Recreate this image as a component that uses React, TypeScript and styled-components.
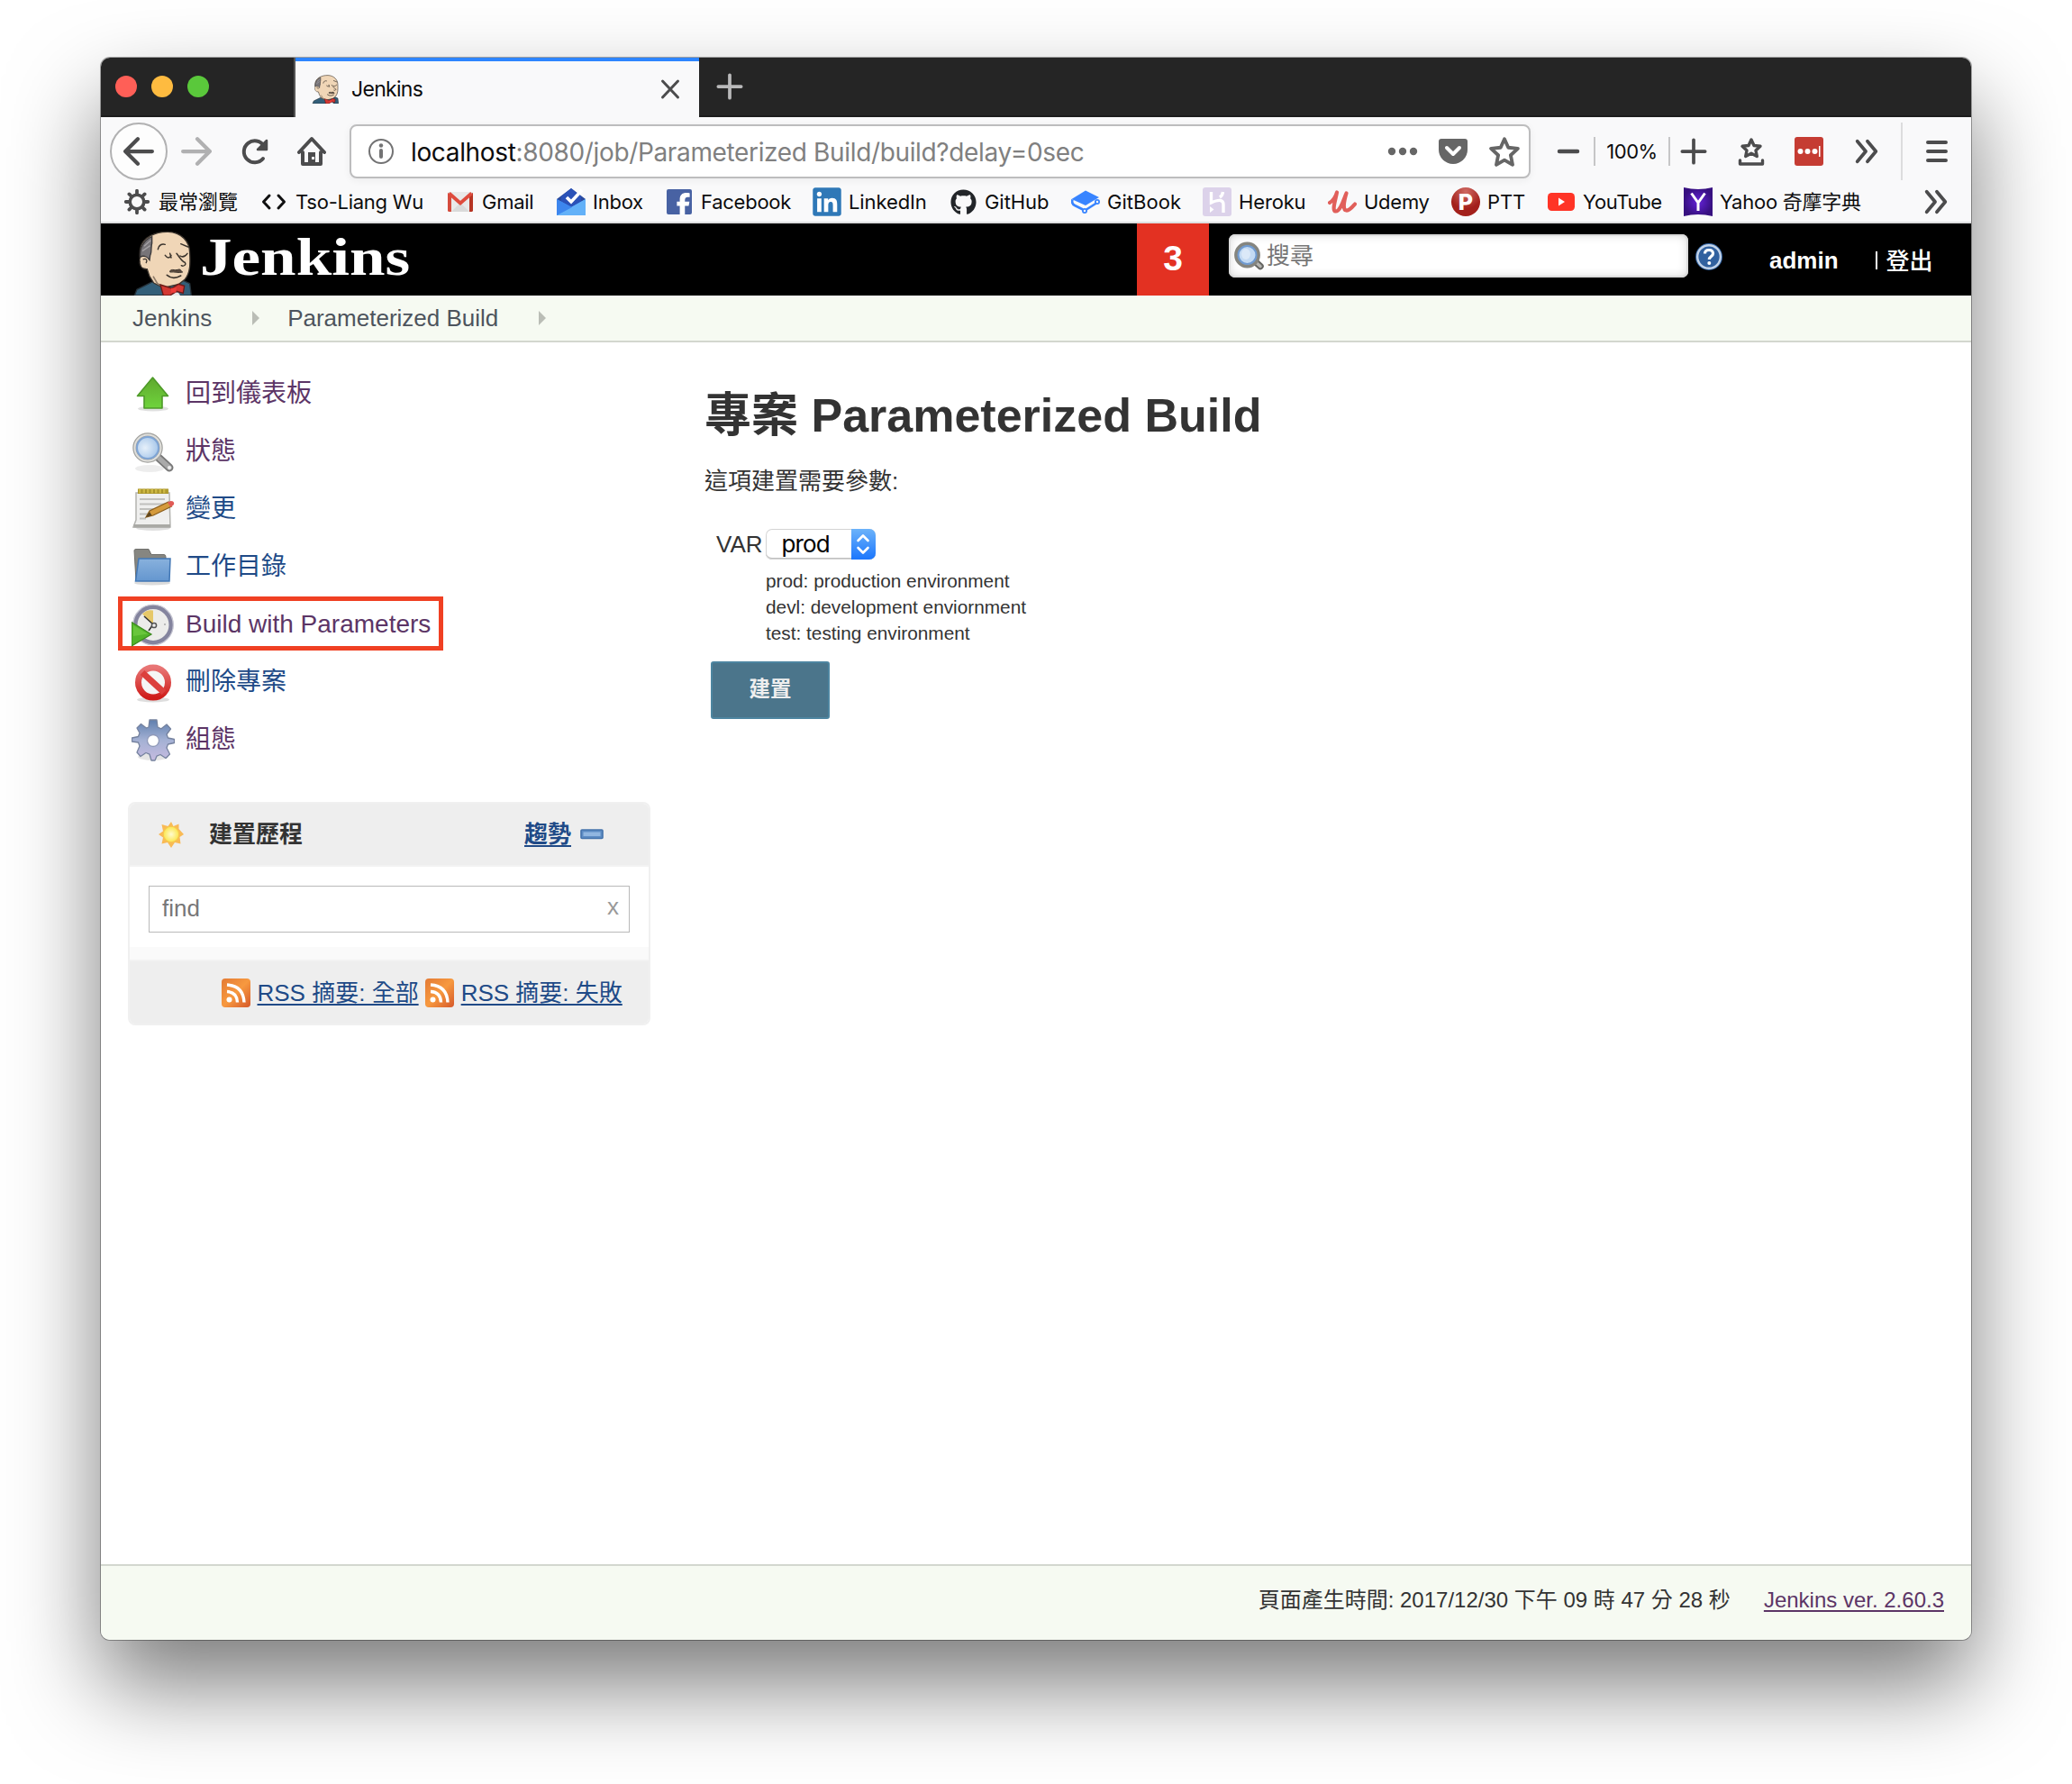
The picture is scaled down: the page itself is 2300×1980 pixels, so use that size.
import React from "react";
import styled, { createGlobalStyle } from "styled-components";
import { FaFacebookF, FaGithub, FaLinkedin } from "react-icons/fa6";

const ui = `Inter, "Noto Sans CJK TC", sans-serif`;
const body = `"Liberation Sans", "Noto Sans CJK TC", sans-serif`;

const Global = createGlobalStyle`
  * { box-sizing: border-box; }
  html, body { margin: 0; background: #fff; }
  body { font-family: ${body}; color: #333; }
  svg { display: block; flex: none; }
`;

const Desktop = styled.div`
  width: 2300px;
  height: 1980px;
  padding: 64px 112px 160px;
  overflow: hidden;
  background: #fff;
`;

const Window = styled.div`
  width: 2076px;
  height: 1756px;
  display: flex;
  flex-direction: column;
  overflow: hidden;
  border-radius: 10px;
  background: #fff;
  box-shadow: 0 0 0 1px rgba(0, 0, 0, 0.32), 0 50px 100px rgba(0, 0, 0, 0.52);
`;

/* ---------- browser chrome ---------- */

const TabStrip = styled.div`
  height: 66px;
  flex: none;
  display: flex;
  background: #252525;
  box-shadow: inset 0 -2px 0 #1c1c1c;
`;

const Lights = styled.div`
  width: 216px;
  display: flex;
  align-items: center;
  gap: 16px;
  padding: 0 0 2px 16px;
  border-right: 2px solid #555;
`;

const Light = styled.i<{ $color: string }>`
  width: 24px;
  height: 24px;
  border-radius: 50%;
  background: ${(p) => p.$color};
`;

const Tab = styled.div`
  width: 448px;
  display: flex;
  align-items: center;
  padding: 0 20px 0 18px;
  border-top: 4px solid #2d85ff;
  background: #f9f9fa;
  color: #0c0c0d;
  font: 23px/32px ${ui};
`;

const TabTitle = styled.span`
  flex: 1;
  margin-left: 14px;
  letter-spacing: -0.7px;
`;

const NewTab = styled.div`
  width: 68px;
  display: flex;
  align-items: center;
  justify-content: center;
  padding-bottom: 2px;
`;

const NavBar = styled.div`
  height: 76px;
  flex: none;
  display: flex;
  align-items: center;
  padding-left: 10px;
  background: #f9f9fa;
`;

const BackButton = styled.div`
  width: 64px;
  height: 64px;
  display: flex;
  align-items: center;
  justify-content: center;
  border: 2px solid #b1b1b2;
  border-radius: 50%;
  background: #fdfdfd;
`;

const Slot = styled.div<{ $w: number; $shift?: number }>`
  width: ${(p) => p.$w}px;
  flex: none;
  display: flex;
  align-items: center;
  justify-content: center;
  padding-left: ${(p) => p.$shift ?? 0}px;
`;

const UrlBar = styled.div`
  width: 1311px;
  height: 60px;
  margin-left: 10px;
  display: flex;
  align-items: center;
  border: 2px solid #bdbdbe;
  border-radius: 8px;
  background: #fff;
  box-shadow: 0 2px 8px rgba(0, 0, 0, 0.06);
`;

const Url = styled.span`
  flex: 1;
  padding-top: 2px;
  color: #808080;
  font: 28px/40px ${ui};
  letter-spacing: -0.35px;
  white-space: pre;
  b { color: #0c0c0d; font-weight: 400; }
`;

const Zoom = styled.span`
  width: 85px;
  height: 32px;
  display: flex;
  align-items: center;
  justify-content: center;
  border: solid #c6c6c7;
  border-width: 0 2px;
  color: #0c0c0d;
  font: 22px/32px ${ui};
  letter-spacing: -0.5px;
`;

const MenuButton = styled.div`
  width: 78px;
  height: 64px;
  display: flex;
  align-items: center;
  justify-content: center;
  border-left: 2px solid #dcdcdd;
`;

const Bookmarks = styled.div`
  height: 42px;
  flex: none;
  display: flex;
  align-items: center;
  padding: 0 0 4px 24px;
  border-bottom: 2px solid #dedfe0;
  background: #f9f9fa;
`;

const Bookmark = styled.div<{ $w: number; $ls?: number }>`
  width: ${(p) => p.$w}px;
  flex: none;
  display: flex;
  align-items: center;
  gap: 8px;
  color: #0c0c0d;
  font: 22px/32px ${ui};
  letter-spacing: ${(p) => p.$ls ?? -0.25}px;
  white-space: nowrap;
`;

const IconBox = styled.span<{ $bg?: string; $r?: number; $size?: number }>`
  width: ${(p) => p.$size ?? 32}px;
  height: ${(p) => p.$size ?? 32}px;
  margin: 0 ${(p) => (32 - (p.$size ?? 32)) / 2}px;
  flex: none;
  display: flex;
  align-items: center;
  justify-content: center;
  overflow: hidden;
  border-radius: ${(p) => p.$r ?? 0}px;
  background: ${(p) => p.$bg ?? "none"};
`;

const FacebookMark = styled(FaFacebookF)`
  margin: 5px 0 0 8px;
`;

const Letter = styled.span`
  color: #fff;
  font: 800 25px/32px ${ui};
  letter-spacing: 0;
`;

/* ---------- Jenkins page ---------- */

const Header = styled.header`
  height: 80px;
  flex: none;
  display: flex;
  background: #000;
`;

const Brand = styled.div`
  width: 1150px;
  display: flex;
  align-items: flex-end;
  padding-left: 35px;
`;

const BrandName = styled.span`
  margin: 0 0 13px 9px;
  color: #fff;
  font: 700 60px/60px "Liberation Serif", serif;
  transform: scaleX(1.185);
  transform-origin: 0 0;
`;

const Alert = styled.div`
  width: 80px;
  color: #fff;
  background: #e33122;
  font: 700 39px/77px ${body};
  text-align: center;
`;

const SearchBox = styled.div`
  width: 510px;
  height: 48px;
  margin: 12px 0 0 22px;
  display: flex;
  align-items: center;
  gap: 3px;
  padding: 0 0 0 5px;
  border-radius: 7px;
  background: #fff;
  box-shadow: inset 0 0 0 2px #dcdcdc, inset 0 0 12px rgba(0, 0, 0, 0.18);
  color: #777;
  font: 26px/44px ${body};
`;

const Help = styled.span`
  width: 32px;
  height: 32px;
  margin: 21px 0 0 7px;
`;

const Login = styled.div`
  display: flex;
  color: #fff;
  font: 700 26px/82px ${body};
  margin-left: 51px;
  span { font: 500 26px/80px "Noto Sans CJK TC", sans-serif; }
`;

const LoginBar = styled.i`
  width: 2px;
  height: 20px;
  margin: 31px 10px 0 41px;
  background: #fff;
`;

const Crumbs = styled.nav`
  height: 52px;
  flex: none;
  display: flex;
  align-items: center;
  padding-left: 35px;
  border-bottom: 2px solid #d3d7cf;
  background: #f6faf2;
  color: #4d545d;
  font: 26px/50px ${body};
`;

const CrumbArrow = styled.i`
  margin: 0 31px 0 45px;
  border: 8px solid transparent;
  border-left-color: #babdb6;
  border-right-width: 0;
`;

const Page = styled.div`
  flex: 1;
  display: flex;
`;

const Side = styled.aside`
  width: 610px;
  padding: 24px 0 0 19px;
`;

const Task = styled.div<{ $visited?: boolean; $boxed?: boolean }>`
  width: ${(p) => (p.$boxed ? 361 : 560)}px;
  height: ${(p) => (p.$boxed ? 60 : 64)}px;
  margin: ${(p) => (p.$boxed ? "2px 0" : "0")};
  display: flex;
  align-items: center;
  gap: 12px;
  padding: 0 0 0 ${(p) => (p.$boxed ? 10 : 15)}px;
  border: ${(p) => (p.$boxed ? "5px solid #f04023" : "none")};
  color: ${(p) => (p.$visited ? "#5c3566" : "#204a87")};
  font: 28px/48px ${body};
  white-space: nowrap;
`;

const TaskIcon = styled.span`
  padding-top: 3px;
`;

const TaskLabel = styled.span`
  padding-top: 2px;
`;

const Panel = styled.section`
  width: 580px;
  height: 248px;
  margin: 38px 0 0 11px;
  display: flex;
  flex-direction: column;
  overflow: hidden;
  border: 2px solid #f0f0f0;
  border-radius: 8px;
  background: #fff;
`;

const PanelHead = styled.div`
  height: 70px;
  flex: none;
  display: flex;
  align-items: center;
  padding-left: 30px;
  border-bottom: 2px solid #f2f2f2;
  background: #eee;
  font: 700 26px/60px ${body};
`;

const PanelTitle = styled.span`
  width: 350px;
  margin-left: 26px;
`;

const Anchor = styled.a<{ $visited?: boolean }>`
  color: ${(p) => (p.$visited ? "#5c3566" : "#204a87")};
  text-decoration: underline;
  text-decoration-thickness: 2px;
  text-underline-offset: 3px;
  text-decoration-skip-ink: none;
  white-space: nowrap;
`;

const Finder = styled.div`
  height: 52px;
  margin: 21px 21px 16px 21px;
  flex: none;
  display: flex;
  justify-content: space-between;
  padding: 0 11px 0 14px;
  border: 1px solid #b9b9b9;
  color: #777;
  font: 26px/48px ${body};
  span { color: #999; line-height: 45px; }
`;

const PanelStrip = styled.div`
  height: 14px;
  flex: none;
  background: #fafafa;
`;

const PanelFoot = styled.div`
  flex: 1;
  display: flex;
  align-items: center;
  gap: 7.5px;
  padding: 0 0 0 102px;
  border-top: 2px solid #f2f2f2;
  background: #eee;
  font: 26px/58px ${body};
`;

const Main = styled.main`
  flex: 1;
  padding: 48px 0 0 60px;
`;

const Title = styled.h1`
  margin: 0;
  font: 700 52px/66px ${body};
`;

const Intro = styled.p`
  margin: 23px 0 0;
  font: 26px/34px ${body};
`;

const Field = styled.div`
  margin: 35px 0 0 13px;
  display: flex;
  align-items: center;
  height: 36px;
  font: 26px/36px ${body};
`;

const Select = styled.div`
  width: 122px;
  height: 34px;
  margin-left: 3px;
  display: flex;
  justify-content: space-between;
  overflow: hidden;
  padding-left: 18px;
  border-radius: 7px;
  background: #fff;
  box-shadow: inset 0 0 0 1px #d4d4d4, inset 0 -2px 0 #c0c0c0;
  color: #000;
  font: 26px/34px ${ui};
  letter-spacing: -0.9px;
`;

const Stepper = styled.span`
  width: 27px;
  display: flex;
  align-items: center;
  justify-content: center;
  background: linear-gradient(#6cb3fa, #1b76fd);
`;

const Description = styled.div`
  margin: 8px 0 0 68px;
  font: 20.8px/29px ${body};
`;

const Submit = styled.div`
  width: 132px;
  height: 64px;
  margin: 17px 0 0 7px;
  border: 2px solid #4d85a0;
  border-radius: 3px;
  background: #4b758b;
  color: #eee;
  font: 700 23.5px/59px ${body};
  text-align: center;
`;

const Footer = styled.footer`
  height: 84px;
  flex: none;
  display: flex;
  justify-content: flex-end;
  gap: 37px;
  padding-right: 30px;
  border-top: 2px solid #d3d7cf;
  background: #f6faf2;
  font: 24px/75px ${body};
`;

/* ---------- drawings ---------- */

const Butler = ({ w, h }: { w: number; h: number }) => (
  <svg width={w} height={h} viewBox="21 30 198 216" preserveAspectRatio="none">
    <path d="M28 246 36 226 84 202 116 196H190L212 206 217 246Z" fill="#335f79" stroke="#26323a" strokeWidth="4" />
    <path d="M92 204 78 182 70 158C52 160 42 142 46 130 46 120 44 100 48 86 56 52 98 33 140 34 184 36 212 66 212 104 214 140 214 170 196 192L176 208 124 220Z" fill="#f0d6b7" stroke="#3b342d" strokeWidth="4" />
    <path d="M86 50C56 62 44 92 47 118 56 112 66 114 78 128L80 112C86 104 82 82 86 72Z" fill="#777478" stroke="#3a383a" strokeWidth="4" />
    <path d="M60 82 82 62M54 98 80 80" stroke="#a5a2a5" strokeWidth="4" />
    <path d="M46 126C60 112 76 120 74 132 73 150 62 160 52 150Z" fill="#f0d6b7" />
    <path d="M56 126C68 120 72 130 66 138" fill="none" stroke="#3b342d" strokeWidth="4" />
    <path d="M106 92C108 78 120 72 130 76M182 74 206 84M130 112Q142 128 150 112M146 106 150 120M180 114Q192 122 204 106M168 106C178 118 186 134 196 136 202 144 190 150 184 146" fill="none" stroke="#3b342d" strokeWidth="4.500" strokeLinecap="round" />
    <path d="M146 168C146 154 162 164 172 160 184 156 182 166 188 168 176 172 160 166 146 168Z" fill="#5a4a3f" stroke="#3b342d" strokeWidth="3" />
    <path d="M136 178C150 190 168 188 182 180" fill="none" stroke="#3b342d" strokeWidth="5" strokeLinecap="round" />
    <path d="M90 182 104 206 116 212" fill="none" stroke="#8d7b69" strokeWidth="5" />
    <path d="M148 246 156 234 174 236 180 246Z" fill="#e8e8e8" />
    <path d="M114 210 152 222 174 208 194 214 190 238 168 232 146 246H124Z" fill="#d33833" stroke="#6b1a17" strokeWidth="4" />
    <path d="M150 222 168 220 166 236 150 236Z" fill="#ef3d3a" />
  </svg>
);

type LineProps = { size: number; d: string; color?: string; width?: number; box?: number };
const Line = ({ size, d, color = "#4c4c4d", width = 4, box = 32 }: LineProps) => (
  <svg width={size} height={size} viewBox={`0 0 ${box} ${box}`} fill="none" stroke={color} strokeWidth={width} strokeLinecap="round" strokeLinejoin="round">
    <path d={d} />
  </svg>
);

const Reload = () => (
  <svg width="32" height="32" viewBox="0 0 32 32" fill="none" stroke="#4c4c4d" strokeWidth="4" strokeLinecap="round">
    <path d="M25 24A12 12 0 1 1 26 10" />
    <path d="M29 4V14H19Z" fill="#4c4c4d" strokeWidth="2.5" strokeLinejoin="round" />
  </svg>
);

const Home = () => (
  <svg width="32" height="34" viewBox="0 0 32 34" fill="none" stroke="#4c4c4d" strokeWidth="4" strokeLinecap="round" strokeLinejoin="round">
    <path d="M2 18 16 3 30 18M6 18V31H26V18" />
    <path d="M12 18h8v13h-8Z" fill="#4c4c4d" stroke="none" />
    <path d="M16 23h3v3h-3Z" fill="#f9f9fa" stroke="none" />
  </svg>
);

const Info = () => (
  <svg width="30" height="30" viewBox="0 0 30 30">
    <circle cx="15" cy="15" r="13" fill="none" stroke="#737374" strokeWidth="2" />
    <circle cx="15" cy="8.5" r="2.2" fill="#737374" />
    <path d="M15 14v7" stroke="#737374" strokeWidth="4" strokeLinecap="round" />
  </svg>
);

const Dots = () => (
  <svg width="34" height="10" viewBox="0 0 34 10" fill="#666">
    <circle cx="5" cy="5" r="4.2" /><circle cx="17" cy="5" r="4.2" /><circle cx="29" cy="5" r="4.2" />
  </svg>
);

const Pocket = () => (
  <svg width="32" height="28" viewBox="0 0 32 28">
    <path d="M3 0H29Q32 0 32 3V12A16 16 0 0 1 0 12V3Q0 0 3 0Z" fill="#666" />
    <path d="M9 10 16 17 23 10" fill="none" stroke="#fff" strokeWidth="4" strokeLinecap="round" strokeLinejoin="round" />
  </svg>
);

const star = "M16 3 20 12 30 13 22.500 20 24.500 30 16 25 7.500 30 9.500 20 2 13 12 12Z";

const Tray = () => (
  <svg width="32" height="32" viewBox="0 0 32 32" fill="none" stroke="#4c4c4d" strokeWidth="3.400" strokeLinecap="round" strokeLinejoin="round">
    <path d="M16 3 19 9.500 26 10.300 21 15 22.300 21.500 16 18.300 9.700 21.500 11 15 6 10.300 13 9.500Z" />
    <path d="M3.500 26V30H28.500V26" />
  </svg>
);

const LastPass = () => (
  <svg width="32" height="32" viewBox="0 0 32 32">
    <rect width="32" height="32" rx="3" fill="#c53c33" />
    <g fill="#fff"><circle cx="6.500" cy="16" r="3" /><circle cx="14.500" cy="16" r="3" /><circle cx="22.500" cy="16" r="3" /><rect x="27" y="10" width="1.500" height="12" /></g>
  </svg>
);

const chevrons = "M5 4 15 16 5 28M17 4 27 16 17 28";

const BookGear = () => (
  <svg width="28" height="28" viewBox="0 0 28 28" fill="none" stroke="#4c4c4d">
    <circle cx="14" cy="14" r="7.800" strokeWidth="3.600" />
    <path d="M14 1.800V6M14 22v4.200M1.800 14H6M22 14h4.200M5.400 5.400 8 8M20 20l2.600 2.600M22.600 5.400 20 8M8 20l-2.600 2.600" strokeWidth="3.800" strokeLinecap="round" />
  </svg>
);

const Gmail = () => (
  <svg width="28" height="22" viewBox="0 0 28 22">
    <rect width="28" height="22" rx="1" fill="#e9e9e9" />
    <path d="M4 22 14 12 24 22Z" fill="#dadada" />
    <path d="M0 1 4 3V22H1L0 21Z" fill="#d54b3d" /><path d="M28 1 24 3V22H27L28 21Z" fill="#b63524" />
    <path d="M1.500 1.500 14 12.500 26.500 1.500" fill="none" stroke="#de4b3d" strokeWidth="3.800" />
  </svg>
);

const InboxIcon = () => (
  <svg width="32" height="32" viewBox="0 0 32 32">
    <path d="M0 13 16 1 32 13V20H0Z" fill="#2a4a9e" />
    <path d="M5 10 16 1 27 10V20L16 26 5 20Z" fill="#2b52b8" />
    <path d="M11 11 16 16 28 3" fill="none" stroke="#fff" strokeWidth="3.600" />
    <path d="M0 13 16 22 32 13V31H0Z" fill="#4b9af4" /><path d="M0 31 32 13V31Z" fill="#63b1f8" /><path d="M0 13 17 22 0 31Z" fill="#3d86ee" />
  </svg>
);

const GitBook = () => (
  <svg width="32" height="26" viewBox="0 0 32 26" fill="none" stroke="#3884ff">
    <path d="M0.500 10 16 0.500 31 8 16 17Z" fill="#3884ff" stroke="none" />
    <path d="M1.500 10.500Q0 15 4 17L13 21.500M17 21.500 28 14.500" strokeWidth="2.600" />
    <circle cx="29" cy="13" r="2.100" strokeWidth="1.800" /><circle cx="15" cy="23" r="2.100" strokeWidth="1.800" />
  </svg>
);

const Heroku = () => (
  <svg width="32" height="32" viewBox="0 0 32 32">
    <rect width="32" height="32" rx="3" fill="#dcd2ea" />
    <path d="M9.500 5V17Q23 11 23 19V28M22.500 5Q22 9 19 11" fill="none" stroke="#fff" strokeWidth="3.400" />
    <path d="M8 21 12.500 24.500 8 28Z" fill="#fff" />
  </svg>
);

const Udemy = () => (
  <svg width="32" height="28" viewBox="0 0 32 28" fill="none" stroke="#e15f5a" strokeLinecap="round" strokeLinejoin="round">
    <path d="M2 15C7 12 9 7 10 3.500 9 10 4 24 8.500 24.500 14 25 18 10 20.500 4.500 18 13 16 23 20.500 23.500 24 24 27 20 30 16.500" strokeWidth="4.200" />
  </svg>
);

const YouTube = () => (
  <svg width="30" height="20" viewBox="0 0 30 20"><rect width="30" height="20" rx="4.500" fill="#ff3426" /><path d="M12 5.500 19 10 12 14.500Z" fill="#fff" /></svg>
);

const Yahoo = () => (
  <svg width="32" height="32" viewBox="0 0 32 32">
    <defs><radialGradient id="yh"><stop offset="0" stopColor="#6422d8" /><stop offset="1" stopColor="#371080" /></radialGradient></defs>
    <path d="M0 0Q16 4 32 0V32Q16 28 0 32Z" fill="url(#yh)" />
    <path d="M8.500 6.500 16 17 23.500 6.500M16 16V26" fill="none" stroke="#fff" strokeWidth="3" />
  </svg>
);

const Magnifier = ({ size }: { size: number }) => (
  <svg width={size} height={size} viewBox="0 0 48 48">
    <defs><radialGradient id="lens" cx="0.4" cy="0.5"><stop offset="0" stopColor="#e6f0fa" /><stop offset="1" stopColor="#a9c8ea" /></radialGradient></defs>
    <ellipse cx="20" cy="42" rx="16" ry="4" fill="#000" opacity="0.07" />
    <path d="M29 29 42 41" stroke="#777" strokeWidth="9" strokeLinecap="round" />
    <path d="M31 31 42 41" stroke="#aaa" strokeWidth="5.500" strokeLinecap="round" />
    <circle cx="42" cy="41" r="2" fill="#eee" />
    <circle cx="18" cy="19" r="14.500" fill="url(#lens)" stroke="#a2a29e" strokeWidth="4.500" />
    <circle cx="18" cy="19" r="14.500" fill="none" stroke="#dfdfdc" strokeWidth="2" />
    <circle cx="18" cy="19" r="12" fill="none" stroke="#7fa5d6" strokeWidth="2" />
  </svg>
);

const SearchIcon = () => (
  <svg width="34" height="34" viewBox="0 0 34 34">
    <path d="M25 24 30 28.500" stroke="#666662" strokeWidth="7.500" strokeLinecap="round" />
    <path d="M26 25 30 28.500" stroke="#b5b5b1" strokeWidth="3.500" strokeLinecap="round" />
    <circle cx="15.500" cy="16" r="12.500" fill="#b9d3f0" stroke="#85857f" strokeWidth="3.800" />
    <circle cx="15.500" cy="16" r="10" fill="#c3daf3" stroke="#6f9ad0" strokeWidth="2" />
    <ellipse cx="14" cy="15" rx="5" ry="6" fill="#dbe9f8" />
  </svg>
);

const HelpIcon = () => (
  <svg width="32" height="32" viewBox="0 0 32 32">
    <circle cx="16" cy="16" r="15" fill="#3465a4" /><circle cx="16" cy="16" r="12.800" fill="#31619f" stroke="#c3d3e8" strokeWidth="2.400" />
    <path d="M11.500 12.500Q11.500 8.500 16 8.500T20.500 12.500C20.500 15.500 16.300 15.500 16.300 19" fill="none" stroke="#fff" strokeWidth="3.200" /><circle cx="16.300" cy="23" r="2" fill="#fff" />
  </svg>
);

const UpArrow = () => (
  <svg width="48" height="48" viewBox="0 0 48 48">
    <defs><linearGradient id="up" x2="0" y2="1"><stop offset="0" stopColor="#5fa82e" /><stop offset="1" stopColor="#6fd43c" /></linearGradient></defs>
    <ellipse cx="24" cy="39.500" rx="17" ry="3" fill="#000" opacity="0.12" />
    <path d="M23.500 5 40.500 25.500H34V39H14V25.500H6.500Z" fill="url(#up)" stroke="#4e9a28" strokeWidth="1.600" strokeLinejoin="round" />
  </svg>
);

const Notepad = () => (
  <svg width="48" height="48" viewBox="0 0 48 48">
    <ellipse cx="24" cy="44" rx="19" ry="3" fill="#000" opacity="0.12" />
    <path d="M5 5H42L43 43H2L5 35Z" fill="#efefee" stroke="#b4b4b0" strokeWidth="1.500" />
    <path d="M2.500 40H43V43.500H2.500Z" fill="#a9a9a5" />
    <path d="M9 12H37M9 17.500H37M9 23H24M9 28.500H20M9 33.500H16" stroke="#c0c0bd" strokeWidth="1.800" />
    <path d="M7 0.500H41V6H7Z" fill="#a8942a" /><path d="M8 3H40" stroke="#cdb844" strokeWidth="4.500" strokeDasharray="2.500 2" />
    <path d="M16 32 20 25 41 15 44.500 20 24 30Z" fill="#d49a3c" stroke="#8a5d1c" strokeWidth="1.200" /><path d="M16 32 20 26 22.500 30Z" fill="#5b4420" />
    <path d="M40 15.500 43.500 14Q48 14 47 18L43.500 21Z" fill="#e05a55" />
  </svg>
);

const Folder = () => (
  <svg width="48" height="48" viewBox="0 0 48 48">
    <defs><linearGradient id="fo" x2="0" y2="1"><stop offset="0" stopColor="#88b1dd" /><stop offset="1" stopColor="#6496cf" /></linearGradient></defs>
    <ellipse cx="23" cy="41" rx="20" ry="2.500" fill="#000" opacity="0.14" />
    <path d="M3 5Q3 3.500 5 3.500H19L22 9.500H36Q38 9.500 38 12V20H10L5 39Z" fill="#868681" stroke="#70706c" />
    <path d="M8 14H43L42 39H4.500Z" fill="url(#fo)" stroke="#4277b5" strokeWidth="1.500" />
  </svg>
);

const Clock = () => (
  <svg width="48" height="48" viewBox="0 0 48 48">
    <circle cx="24" cy="23.500" r="20" fill="#ececea" stroke="#84849e" strokeWidth="5" />
    <circle cx="24" cy="23.500" r="22.300" fill="none" stroke="#c8c8d4" strokeWidth="1.200" />
    <path d="M24 23 12 11.500Q17 6 24 7.500Z" fill="#e6c869" />
    <path d="M14 14 24 23M24 23 19 30" stroke="#333" strokeWidth="1.600" /><circle cx="25" cy="24" r="2.600" fill="#eee" stroke="#555" strokeWidth="1.500" />
    <circle cx="37" cy="23" r="1" fill="#aaa" />
    <path d="M0 20.500 22 34 0 47Z" fill="#52b52a" stroke="#3c8a1e" strokeWidth="1.200" /><path d="M2 24 18 33.500 2 36Z" fill="#69c63c" />
  </svg>
);

const Forbidden = () => (
  <svg width="48" height="48" viewBox="0 0 48 48">
    <defs><linearGradient id="no" x2="0" y2="1"><stop offset="0" stopColor="#e87575" /><stop offset="1" stopColor="#cf1d1a" /></linearGradient></defs>
    <ellipse cx="24" cy="42.500" rx="18" ry="3" fill="#000" opacity="0.13" />
    <circle cx="24" cy="23.500" r="16.500" fill="#f5f5f5" stroke="url(#no)" strokeWidth="7" />
    <path d="M12 12.500 36 34.500" stroke="#dc403d" strokeWidth="7" />
  </svg>
);

const Gear = () => (
  <svg width="48" height="48" viewBox="0 0 48 48">
    <defs><linearGradient id="ge" x2="0" y2="1"><stop offset="0" stopColor="#5f7fae" /><stop offset="0.5" stopColor="#a4b1d4" /><stop offset="1" stopColor="#c6bbe0" /></linearGradient></defs>
    <ellipse cx="24" cy="42" rx="17" ry="4" fill="#000" opacity="0.1" />
    <path d="M20 1h8l1 8 4 1.800 6-4.800 4.500 5-4.500 6 1.500 4 7 1.500v4l-7 1.500-1.500 4 3.500 7-4.500 4.500-6-4-4 1.700L26 46h-4l-2-6.800-4-1.700-6 4L6 37l3-7-1.500-4L0.500 25v-4l7-1.500 1.500-4L6 10l4.500-4.500 6 4.500L19 9Z" fill="url(#ge)" stroke="#75829f" strokeWidth="1.300" strokeLinejoin="round" />
    <circle cx="24" cy="24" r="6.500" fill="#fff" stroke="#8f99b8" strokeWidth="1.300" />
  </svg>
);

const Sun = () => (
  <svg width="32" height="32" viewBox="0 0 32 32">
    <defs><radialGradient id="su"><stop offset="0" stopColor="#fffbd0" /><stop offset="1" stopColor="#fbe64c" /></radialGradient></defs>
    <path d="M16 2 18.500 7 24.500 4.500 24.500 10 30 16 25.500 19 26.500 26.500 20 25 16 31 12 25 5.500 26.500 7 19.500 2 16 7 12.500 5.500 5 12.500 7Z" fill="#f9ba55" />
    <circle cx="16" cy="16" r="8.800" fill="url(#su)" stroke="#f6c550" strokeWidth="1.200" />
  </svg>
);

const Collapse = () => (
  <svg width="26" height="12" viewBox="0 0 26 12"><rect x="1" y="1" width="24" height="9.500" rx="1" fill="#5d8cc4" stroke="#4473ac" strokeWidth="1.600" /><rect x="3.500" y="3.500" width="19" height="4.500" fill="#90b6e0" /></svg>
);

const Rss = () => (
  <svg width="32" height="32" viewBox="0 0 32 32">
    <defs><linearGradient id="rs" x2="1" y2="1"><stop offset="0" stopColor="#e37a35" /><stop offset="0.5" stopColor="#f7993f" /><stop offset="1" stopColor="#d5582a" /></linearGradient></defs>
    <rect width="32" height="32" rx="4" fill="url(#rs)" />
    <circle cx="8.500" cy="23.500" r="3" fill="#fff" />
    <path d="M6 14.500Q17 15 17.500 26.500M6 7Q24 8 25 26.500" fill="none" stroke="#fff" strokeWidth="3.400" />
  </svg>
);

const SelectArrows = () => (
  <svg width="16" height="24" viewBox="0 0 16 24" fill="none" stroke="#fff" strokeWidth="2.6" strokeLinecap="round" strokeLinejoin="round">
    <path d="M2.500 8 8 2.500 13.500 8M2.500 16 8 21.500 13.500 16" />
  </svg>
);

/* ---------- data ---------- */

const bookmarks: { label: string; w: number; icon: React.ReactNode; ls?: number }[] = [
  { label: "最常瀏覽", w: 152, icon: <BookGear />, ls: 0 },
  { label: "Tso-Liang Wu", w: 207, icon: <Line size={28} box={28} width={3} color="#111" d="M9 7 2.500 14 9 21M19 7 25.500 14 19 21" /> },
  { label: "Gmail", w: 123, icon: <Gmail /> },
  { label: "Inbox", w: 120, icon: <InboxIcon /> },
  { label: "Facebook", w: 164, icon: <IconBox $size={28} $bg="#4862a3" $r={2}><FacebookMark size={25} color="#fff" /></IconBox> },
  { label: "LinkedIn", w: 151, icon: <IconBox $bg="#fff" $r={3}><FaLinkedin size={36} color="#2f78b7" /></IconBox>, ls: -0.1 },
  { label: "GitHub", w: 136, icon: <FaGithub size={29} color="#222529" />, ls: -0.05 },
  { label: "GitBook", w: 146, icon: <GitBook />, ls: 0.05 },
  { label: "Heroku", w: 139, icon: <Heroku />, ls: -0.15 },
  { label: "Udemy", w: 137, icon: <Udemy /> },
  { label: "PTT", w: 106, icon: <IconBox $bg="radial-gradient(circle at 50% 15%, #cf6a63, #a3201b 60%)" $r={16}><Letter>P</Letter></IconBox>, ls: -0.1 },
  { label: "YouTube", w: 152, icon: <YouTube />, ls: -0.35 },
  { label: "Yahoo 奇摩字典", w: 265, icon: <Yahoo /> },
];

const tasks: { label: string; icon: React.ReactNode; visited?: boolean; boxed?: boolean }[] = [
  { label: "回到儀表板", icon: <UpArrow />, visited: true },
  { label: "狀態", icon: <Magnifier size={48} />, visited: true },
  { label: "變更", icon: <Notepad /> },
  { label: "工作目錄", icon: <Folder /> },
  { label: "Build with Parameters", icon: <Clock />, visited: true, boxed: true },
  { label: "刪除專案", icon: <Forbidden /> },
  { label: "組態", icon: <Gear />, visited: true },
];

export default function App() {
  return (
    <Desktop>
      <Global />
      <Window>
        <TabStrip>
          <Lights><Light $color="#ff5f57" /><Light $color="#febb40" /><Light $color="#5ac83b" /></Lights>
          <Tab>
            <Butler w={30} h={32} />
            <TabTitle>Jenkins</TabTitle>
            <Line size={24} box={24} width={3} d="M3.500 3 20.500 21M20.500 3 3.500 21" />
          </Tab>
          <NewTab><Line size={30} color="#b9b9ba" d="M16 2.500V29.500M2.500 16H29.500" /></NewTab>
        </TabStrip>

        <NavBar>
          <BackButton><Line size={34} d="M30 16H2M15 3 2 16 15 29" /></BackButton>
          <Slot $w={64}><Line size={34} color="#b0b0b1" d="M2 16H30M17 3 30 16 17 29" /></Slot>
          <Slot $w={66}><Reload /></Slot>
          <Slot $w={60}><Home /></Slot>
          <Slot $w={2} />
          <UrlBar>
            <Slot $w={65}><Info /></Slot>
            <Slot $w={1} />
            <Url><b>localhost</b>:8080/job/Parameterized Build/build?delay=0sec</Url>
            <Slot $w={54}><Dots /></Slot>
            <Slot $w={58}><Pocket /></Slot>
            <Slot $w={55}><Line size={34} color="#666" width={3.6} d={star} /></Slot>
          </UrlBar>
          <Slot $w={70} $shift={14}><Line size={26} box={26} width={4.5} d="M3 13H23" /></Slot>
          <Zoom>100%</Zoom>
          <Slot $w={52}><Line size={30} d="M16 2.500V29.500M2.500 16H29.500" /></Slot>
          <Slot $w={76}><Tray /></Slot>
          <Slot $w={52}><LastPass /></Slot>
          <Slot $w={76}><Line size={30} d={chevrons} /></Slot>
          <MenuButton><Line size={28} box={28} d="M4 4H24M4 14H24M4 24H24" /></MenuButton>
        </NavBar>

        <Bookmarks>
          {bookmarks.map((b) => (
            <Bookmark key={b.label} $w={b.w} $ls={b.ls}>
              <Slot $w={32}>{b.icon}</Slot>
              {b.label}
            </Bookmark>
          ))}
          <Line size={30} d={chevrons} />
        </Bookmarks>

        <Header>
          <Brand>
            <Butler w={66} h={72} />
            <BrandName>Jenkins</BrandName>
          </Brand>
          <Alert>3</Alert>
          <SearchBox><SearchIcon />搜尋</SearchBox>
          <Help><HelpIcon /></Help>
          <Login>admin<LoginBar /><span>登出</span></Login>
        </Header>

        <Crumbs>Jenkins<CrumbArrow />Parameterized Build<CrumbArrow /></Crumbs>

        <Page>
          <Side>
            {tasks.map((t) => (
              <Task key={t.label} $visited={t.visited} $boxed={t.boxed}>
                <TaskIcon>{t.icon}</TaskIcon>
                <TaskLabel>{t.label}</TaskLabel>
              </Task>
            ))}
            <Panel>
              <PanelHead>
                <Sun />
                <PanelTitle>建置歷程</PanelTitle>
                <Anchor>趨勢</Anchor>
                <Slot $w={46}><Collapse /></Slot>
              </PanelHead>
              <Finder>find<span>x</span></Finder>
              <PanelStrip />
              <PanelFoot>
                <Rss /><Anchor>RSS 摘要: 全部</Anchor>
                <Rss /><Anchor>RSS 摘要: 失敗</Anchor>
              </PanelFoot>
            </Panel>
          </Side>
          <Main>
            <Title>專案 Parameterized Build</Title>
            <Intro>這項建置需要參數:</Intro>
            <Field>
              VAR
              <Select>prod<Stepper><SelectArrows /></Stepper></Select>
            </Field>
            <Description>
              prod: production environment<br />
              devl: development enviornment<br />
              test: testing environment
            </Description>
            <Submit>建置</Submit>
          </Main>
        </Page>

        <Footer>
          <span>頁面產生時間: 2017/12/30 下午 09 時 47 分 28 秒</span>
          <Anchor $visited>Jenkins ver. 2.60.3</Anchor>
        </Footer>
      </Window>
    </Desktop>
  );
}
